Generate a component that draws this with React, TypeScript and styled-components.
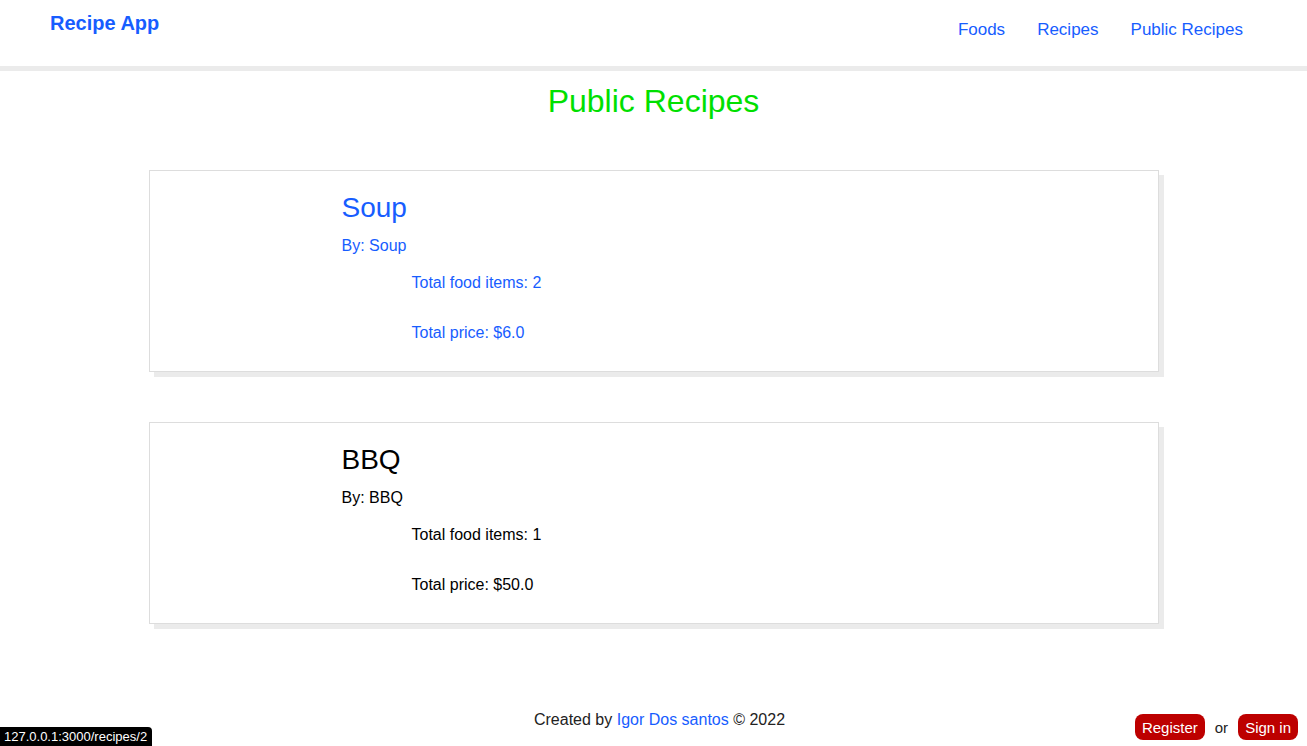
import * as React from "react";
import styled, { createGlobalStyle } from "styled-components";

const GlobalStyle = createGlobalStyle`
  html, body {
    margin: 0;
    padding: 0;
    background: #ffffff;
    font-family: "Liberation Sans", Arial, Helvetica, sans-serif;
  }
`;

const blue = "#175dff";

interface IRecipe {
  id: number;
  name: string;
  author: string;
  foodItems: number;
  price: string;
  highlighted?: boolean;
}

const recipes: IRecipe[] = [
  { id: 1, name: "Soup", author: "Soup", foodItems: 2, price: "6.0", highlighted: true },
  { id: 2, name: "BBQ", author: "BBQ", foodItems: 1, price: "50.0" },
];

const Page = styled.div`
  display: flex;
  flex-direction: column;
  min-height: 100vh;
`;

const Header = styled.header`
  display: flex;
  justify-content: space-between;
  align-items: flex-start;
  height: 66px;
  padding: 0 64px 0 50px;
  border-bottom: 5px solid #ebebeb;
`;

const Logo = styled.a`
  margin-top: 12px;
  font-size: 20px;
  line-height: 23px;
  font-weight: bold;
  color: ${blue};
  text-decoration: none;
`;

const Nav = styled.nav`
  display: flex;
  gap: 32px;
  margin-top: 20px;
`;

const NavLink = styled.a`
  font-size: 17px;
  line-height: 20px;
  color: ${blue};
  text-decoration: none;
`;

const Main = styled.main`
  flex: 1;
  display: flex;
  flex-direction: column;
  align-items: center;
  padding-top: 12px;
`;

const Title = styled.h1`
  margin: 0 0 50px;
  font-size: 32px;
  line-height: 37px;
  font-weight: normal;
  color: #00e000;
`;

const CardList = styled.div`
  display: flex;
  flex-direction: column;
  gap: 50px;
`;

const Card = styled.div<{ $highlighted?: boolean }>`
  box-sizing: border-box;
  width: 1010px;
  padding: 21px 20px 29px 192px;
  border: 1px solid #dddddd;
  box-shadow: 5px 5px 0 #ebebeb;
  color: ${(p) => (p.$highlighted ? blue : "#000000")};
`;

const CardTitle = styled.h2`
  margin: 0;
  font-size: 28px;
  line-height: 32px;
  font-weight: normal;
`;

const Author = styled.p`
  margin: 13px 0 0;
  font-size: 16px;
  line-height: 18px;
`;

const Stats = styled.div`
  display: flex;
  flex-direction: column;
  gap: 32px;
  margin-top: 19px;
  padding-left: 70px;
`;

const Stat = styled.p`
  margin: 0;
  font-size: 16px;
  line-height: 18px;
`;

const Footer = styled.footer`
  display: grid;
  grid-template-columns: 1fr auto 1fr;
  align-items: start;
  padding: 0 9px 6px;
`;

const Credit = styled.p`
  grid-column: 2;
  margin: -3px 0 0 12px;
  font-size: 16px;
  line-height: 18px;
  color: #222222;
`;

const CreditLink = styled.a`
  color: ${blue};
  text-decoration: none;
`;

const Auth = styled.div`
  grid-column: 3;
  justify-self: end;
  display: flex;
  align-items: center;
  gap: 10px;
  font-size: 15px;
  color: #222222;
`;

const AuthButton = styled.a`
  display: inline-flex;
  align-items: center;
  height: 26px;
  padding: 0 7px;
  border-radius: 8px;
  background: #bd0000;
  color: #ffffff;
  font-size: 15px;
  text-decoration: none;
`;

const StatusBar = styled.div`
  position: fixed;
  left: 0;
  bottom: 0;
  height: 19px;
  padding: 0 5px 0 4px;
  display: flex;
  align-items: center;
  background: #000000;
  color: #ffffff;
  font-size: 13px;
  border-top-right-radius: 4px;
`;

const RecipeCard = ({ recipe }: { recipe: IRecipe }) => (
  <Card $highlighted={recipe.highlighted}>
    <CardTitle>{recipe.name}</CardTitle>
    <Author>By: {recipe.author}</Author>
    <Stats>
      <Stat>Total food items: {recipe.foodItems}</Stat>
      <Stat>Total price: ${recipe.price}</Stat>
    </Stats>
  </Card>
);

export default function App() {
  return (
    <Page>
      <GlobalStyle />
      <Header>
        <Logo href="#">Recipe App</Logo>
        <Nav>
          <NavLink href="#">Foods</NavLink>
          <NavLink href="#">Recipes</NavLink>
          <NavLink href="#">Public Recipes</NavLink>
        </Nav>
      </Header>
      <Main>
        <Title>Public Recipes</Title>
        <CardList>
          {recipes.map((r) => (
            <RecipeCard key={r.id} recipe={r} />
          ))}
        </CardList>
      </Main>
      <Footer>
        <Credit>
          Created by <CreditLink href="#">Igor Dos santos</CreditLink> © 2022
        </Credit>
        <Auth>
          <AuthButton href="#">Register</AuthButton>
          or
          <AuthButton href="#">Sign in</AuthButton>
        </Auth>
      </Footer>
      <StatusBar>127.0.0.1:3000/recipes/2</StatusBar>
    </Page>
  );
}
